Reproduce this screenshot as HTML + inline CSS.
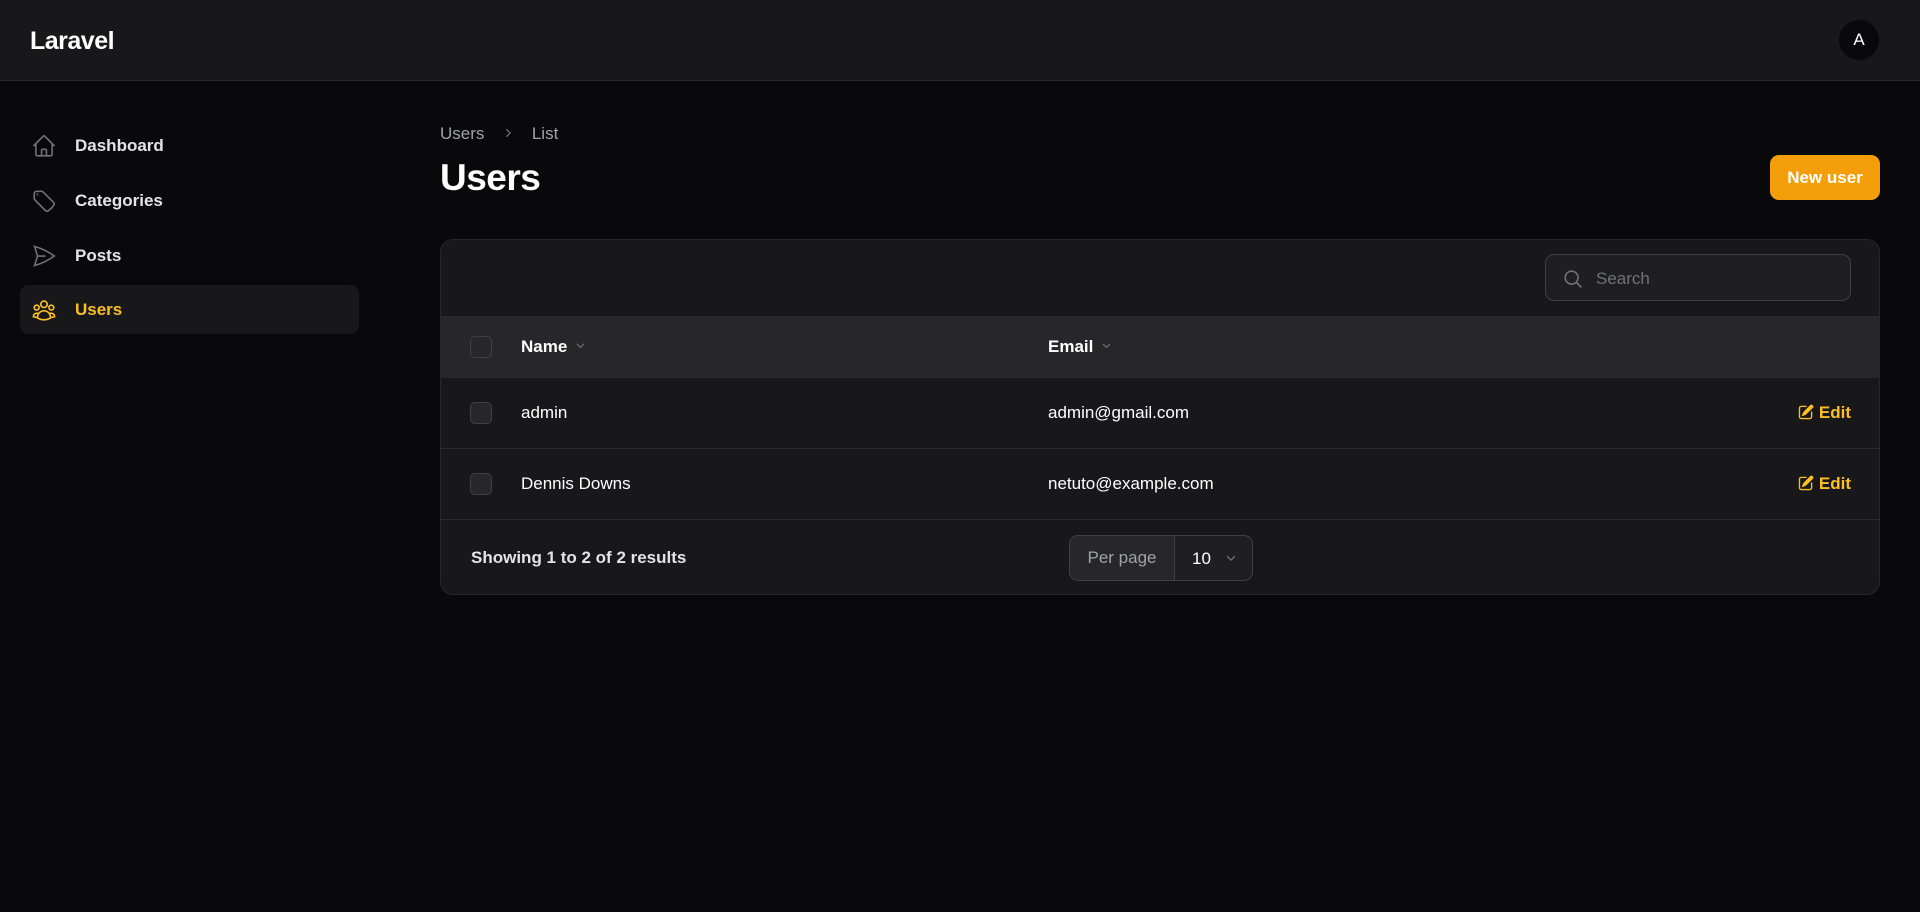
<!DOCTYPE html>
<html><head><meta charset="utf-8"><style>
*{box-sizing:border-box;margin:0;padding:0}
body{width:1920px;height:912px;background:#09090b;font-family:"Liberation Sans",sans-serif;color:#fff;position:relative;overflow:hidden;font-size:17px}
.top{position:absolute;left:0;top:0;width:1920px;height:81px;background:#18181b;border-bottom:1px solid #2a2a2e}
.logo{position:absolute;left:30px;top:27px;font-size:25px;font-weight:bold;letter-spacing:-0.5px}
.av{position:absolute;left:1839px;top:20px;width:40px;height:40px;border-radius:50%;background:#09090b;text-align:center;line-height:40px;font-size:17px}
.nav{position:absolute;left:20px;width:339px;height:49px;border-radius:9px;font-weight:bold;font-size:17px;color:#e4e4e7}
.nav svg{position:absolute;left:11px;top:12px}
.nav span{position:absolute;left:55px;top:15px}
.nav.act{background:#18181b;color:#fbbf24}
.bc{position:absolute;left:440px;top:124px;color:#a1a1aa;font-size:17px}
h1{position:absolute;left:440px;top:157px;font-size:37px;font-weight:bold;letter-spacing:-0.5px}
.btn{position:absolute;left:1770px;top:155px;width:110px;height:45px;background:#f59e0b;border-radius:9px;font-weight:bold;text-align:center;line-height:45px;font-size:17px}
.card{position:absolute;left:440px;top:239px;width:1440px;height:356px;background:#18181b;border:1px solid #27272a;border-radius:13px;overflow:hidden}
.search{position:absolute;left:1104px;top:14px;width:306px;height:47px;border:1px solid #3f3f46;border-radius:9px;background:#1f1f22}
.search span{position:absolute;left:50px;top:14px;color:#71717a}
.row{position:absolute;left:0;width:1440px;border-top:1px solid #2a2a2e}
.cb{position:absolute;left:29px;width:22px;height:22px;border:1px solid #3f3f46;border-radius:5px;background:#27272a}
.t{position:absolute;font-size:17px}
.edit{position:absolute;right:30px;color:#fbbf24;font-weight:bold}
.edit svg{vertical-align:-3px;margin-right:4px}
.chev{vertical-align:0px;margin-left:7px}
</style></head><body>
<div class="top"><div class="logo">Laravel</div><div class="av">A</div></div>

<div class="nav" style="top:121px"><svg width="26" height="26" viewBox="0 0 24 24" fill="none" stroke="#71717a" stroke-width="1.5"><path d="M2.25 12l8.954-8.955a1.126 1.126 0 011.591 0L21.75 12M4.5 9.75v10.125c0 .621.504 1.125 1.125 1.125H9.75v-4.875c0-.621.504-1.125 1.125-1.125h2.25c.621 0 1.125.504 1.125 1.125V21h4.125c.621 0 1.125-.504 1.125-1.125V9.75M8.25 21h8.25"/></svg><span>Dashboard</span></div>
<div class="nav" style="top:176px"><svg width="26" height="26" viewBox="0 0 24 24" fill="none" stroke="#71717a" stroke-width="1.5"><path d="M9.568 3H5.25A2.25 2.25 0 003 5.25v4.318c0 .597.237 1.17.659 1.591l9.581 9.581c.699.699 1.780.872 2.607.330a18.095 18.095 0 005.223-5.223c.542-.827.369-1.908-.33-2.607L11.16 3.66A2.25 2.25 0 009.568 3z"/><path d="M6 6h.008v.008H6V6z"/></svg><span>Categories</span></div>
<div class="nav" style="top:231px"><svg width="26" height="26" viewBox="0 0 24 24" fill="none" stroke="#71717a" stroke-width="1.5"><path d="M6 12L3.269 3.126A59.768 59.768 0 0121.485 12 59.77 59.77 0 013.27 20.876L5.999 12zm0 0h7.5"/></svg><span>Posts</span></div>
<div class="nav act" style="top:285px"><svg width="26" height="26" viewBox="0 0 24 24" fill="none" stroke="#fbbf24" stroke-width="1.5"><path d="M18 18.72a9.094 9.094 0 003.741-.479 3 3 0 00-4.682-2.72m.94 3.198l.001.031c0 .225-.012.447-.037.666A11.944 11.944 0 0112 21c-2.17 0-4.207-.576-5.963-1.584A6.062 6.062 0 016 18.719m12 0a5.971 5.971 0 00-.941-3.197m0 0A5.995 5.995 0 0012 12.75a5.995 5.995 0 00-5.058 2.772m0 0a3 3 0 00-4.681 2.72 8.986 8.986 0 003.74.477m.94-3.197a5.971 5.971 0 00-.94 3.197M15 6.75a3 3 0 11-6 0 3 3 0 016 0zm6 3a2.250 2.250 0 11-4.5 0 2.250 2.250 0 014.5 0zm-13.5 0a2.250 2.250 0 11-4.5 0 2.250 2.250 0 014.5 0z"/></svg><span>Users</span></div>

<div class="bc">Users <svg style="margin:0 12px;vertical-align:-1px" width="14" height="14" viewBox="0 0 20 20" fill="none" stroke="#71717a" stroke-width="1.8"><path d="M7.5 4.5L13 10l-5.5 5.5"/></svg> List</div>
<h1>Users</h1>
<div class="btn">New user</div>

<div class="card">
 <div class="search"><svg style="position:absolute;left:16px;top:13px" width="22" height="22" viewBox="0 0 24 24" fill="none" stroke="#71717a" stroke-width="1.8"><circle cx="10.5" cy="10.5" r="7"/><path d="M15.5 15.5L21 21"/></svg><span>Search</span></div>
 <div class="row" style="top:76px;height:61px;background:#27272a">
  <div class="cb" style="top:19px"></div>
  <div class="t" style="left:80px;top:20px;font-weight:bold">Name<svg class="chev" width="13" height="13" viewBox="0 0 20 20" fill="none" stroke="#71717a" stroke-width="1.8"><path d="M4.5 7.5L10 13l5.5-5.5"/></svg></div>
  <div class="t" style="left:607px;top:20px;font-weight:bold">Email<svg class="chev" width="13" height="13" viewBox="0 0 20 20" fill="none" stroke="#71717a" stroke-width="1.8"><path d="M4.5 7.5L10 13l5.5-5.5"/></svg></div>
 </div>
 <div class="row" style="top:137px;height:71px">
  <div class="cb" style="top:24px"></div>
  <div class="t" style="left:80px;top:25px">admin</div>
  <div class="t" style="left:607px;top:25px">admin@gmail.com</div>
  <div class="t edit" style="top:25px"><svg width="18" height="18" viewBox="0 0 20 20" fill="#fbbf24"><path d="M5.433 13.917l1.262-3.155A4 4 0 017.58 9.42l6.92-6.918a2.121 2.121 0 013 3l-6.92 6.918c-.383.383-.84.685-1.343.886l-3.154 1.262a.5.5 0 01-.65-.65z"/><path d="M3.5 5.75c0-.69.56-1.25 1.25-1.25H10A.75.75 0 0010 3H4.75A2.75 2.75 0 002 5.75v9.5A2.75 2.75 0 004.75 18h9.5A2.75 2.75 0 0017 15.25V10a.75.75 0 00-1.5 0v5.25c0 .69-.56 1.25-1.25 1.25h-9.5c-.69 0-1.25-.56-1.25-1.25v-9.5z"/></svg>Edit</div>
 </div>
 <div class="row" style="top:208px;height:71px">
  <div class="cb" style="top:24px"></div>
  <div class="t" style="left:80px;top:25px">Dennis Downs</div>
  <div class="t" style="left:607px;top:25px">netuto@example.com</div>
  <div class="t edit" style="top:25px"><svg width="18" height="18" viewBox="0 0 20 20" fill="#fbbf24"><path d="M5.433 13.917l1.262-3.155A4 4 0 017.58 9.42l6.92-6.918a2.121 2.121 0 013 3l-6.92 6.918c-.383.383-.84.685-1.343.886l-3.154 1.262a.5.5 0 01-.65-.65z"/><path d="M3.5 5.75c0-.69.56-1.25 1.25-1.25H10A.75.75 0 0010 3H4.75A2.75 2.75 0 002 5.75v9.5A2.75 2.75 0 004.75 18h9.5A2.75 2.75 0 0017 15.25V10a.75.75 0 00-1.5 0v5.25c0 .69-.56 1.25-1.25 1.25h-9.5c-.69 0-1.25-.56-1.25-1.25v-9.5z"/></svg>Edit</div>
 </div>
 <div class="row" style="top:279px;height:77px">
  <div class="t" style="left:30px;top:28px;font-weight:bold;color:#e4e4e7">Showing 1 to 2 of 2 results</div>
  <div style="position:absolute;left:628px;top:15px;width:184px;height:46px;border:1px solid #3f3f46;border-radius:9px;background:#1f1f22">
   <div style="position:absolute;left:0;top:0;width:105px;height:44px;background:#27272a;border-right:1px solid #3f3f46;border-radius:9px 0 0 9px;color:#a1a1aa;line-height:44px;text-align:center">Per page</div>
   <div style="position:absolute;left:122px;top:13px">10</div>
   <svg style="position:absolute;left:154px;top:15px" width="14" height="14" viewBox="0 0 20 20" fill="none" stroke="#71717a" stroke-width="1.8"><path d="M4.5 7.5L10 13l5.5-5.5"/></svg>
  </div>
 </div>
</div>
</body></html>
